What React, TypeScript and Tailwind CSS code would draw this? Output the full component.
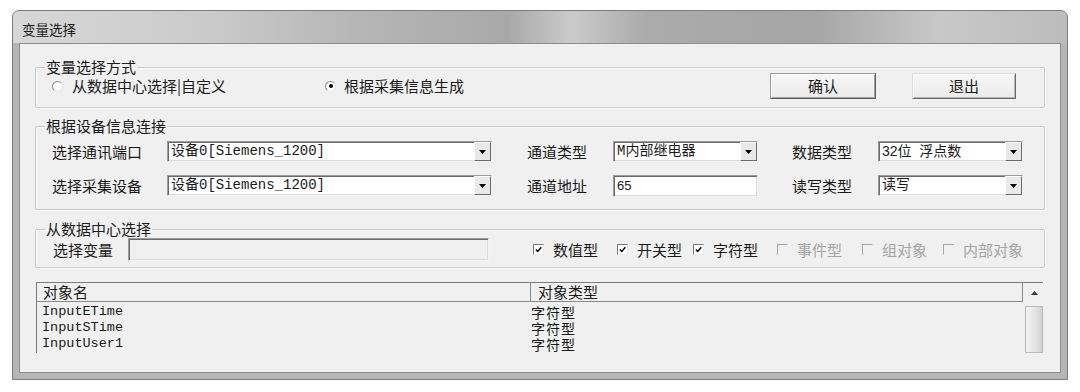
import React from "react";

// ─── Shared styles ────────────────────────────────────────────────────────────

const sunken =
    "border border-t-[#9c9c9c] border-l-[#9c9c9c] border-b-[#f4f4f4] border-r-[#f4f4f4] shadow-[inset_1px_1px_0_#6a6a6a,inset_-1px_-1px_0_#dcdcdc]";

const groupBox = "m-0 p-0 border border-[#c9c9c9] rounded-[2px] shadow-[inset_1px_1px_0_#fafafa,1px_1px_0_#fafafa]";

const monoFont = "font-['Liberation_Mono','Noto_Sans_CJK_SC',monospace]";

// ─── Small controls ───────────────────────────────────────────────────────────

function DownArrow() {
    return (
        <svg width="7" height="4" viewBox="0 0 7 4">
            <polygon points="0,0 7,0 3.5,4" fill="#000" />
        </svg>
    );
}

function Combo({ value, className, textClass = monoFont }: { value: string; className: string; textClass?: string }) {
    return (
        <div className={`flex h-[21px] items-stretch bg-white ${sunken} ${className}`}>
            <span className={`flex-1 truncate pl-[3px] text-[14px] leading-[18px] ${textClass}`}>{value}</span>
            <span className="flex w-[17px] items-center justify-center border border-t-white border-l-white border-b-[#6a6a6a] border-r-[#6a6a6a] bg-[#e9e9e9]">
                <DownArrow />
            </span>
        </div>
    );
}

function TextBox({ value, className }: { value?: string; className: string }) {
    return (
        <div className={`flex items-center ${sunken} ${className}`}>
            <span className="pl-[3px] font-['Liberation_Sans',sans-serif] text-[13px]">{value}</span>
        </div>
    );
}

function Radio({ checked }: { checked?: boolean }) {
    return (
        <span className="flex h-[11px] w-[11px] shrink-0 items-center justify-center rounded-full border border-t-[#8a8a8a] border-l-[#8a8a8a] border-b-[#e2e2e2] border-r-[#e2e2e2] bg-white">
            {checked && <span className="h-[4px] w-[4px] rounded-full bg-black" />}
        </span>
    );
}

function Check({ label, checked, disabled, className }: { label: string; checked?: boolean; disabled?: boolean; className: string }) {
    return (
        <div className={`flex items-center ${className}`}>
            <span
                className={`flex h-[11px] w-[11px] shrink-0 items-center justify-center border ${
                    disabled
                        ? "border-t-[#a8a8a8] border-l-[#a8a8a8] border-b-transparent border-r-transparent"
                        : "border-t-[#7a7a7a] border-l-[#7a7a7a] border-b-[#e6e6e6] border-r-[#e6e6e6] bg-white"
                }`}
            >
                {checked && (
                    <svg width="7" height="7" viewBox="0 0 7 7">
                        <path d="M0.8 3.4 L2.8 5.4 L6.3 1.2" stroke="#000" strokeWidth="1.4" fill="none" />
                    </svg>
                )}
            </span>
            <span className={`ml-[9px] text-[15px] leading-[18px] ${disabled ? "text-[#a3a3a3]" : ""}`}>{label}</span>
        </div>
    );
}

function Button({ label, isDefault, className }: { label: string; isDefault?: boolean; className: string }) {
    return (
        <button
            className={`flex h-[26px] items-center justify-center bg-[linear-gradient(#f6f6f6,#ebebeb)] text-[15px] leading-[18px] border ${
                isDefault
                    ? "border-t-[#9a9a9a] border-l-[#9a9a9a] border-b-[#5c5c5c] border-r-[#5c5c5c] shadow-[inset_1px_1px_0_#fff,inset_-1px_-1px_0_#a3a3a3]"
                    : "border-t-[#dadada] border-l-[#dadada] border-b-[#6a6a6a] border-r-[#6a6a6a] shadow-[inset_1px_1px_0_#fff,inset_-1px_-1px_0_#b5b5b5]"
            } ${className}`}
        >
            {label}
        </button>
    );
}

function Legend({ children }: { children: React.ReactNode }) {
    return <legend className="ml-[9px] px-[1px] text-[15px] leading-[16px]">{children}</legend>;
}

// ─── Data ─────────────────────────────────────────────────────────────────────

const objects = [
    { name: "InputETime", type: "字符型" },
    { name: "InputSTime", type: "字符型" },
    { name: "InputUser1", type: "字符型" },
];

// ─── Dialog ───────────────────────────────────────────────────────────────────

export default function App() {
    return (
        <div className="h-[392px] w-[1080px] bg-white pt-[10px] pl-[12px] font-['Noto_Sans_CJK_SC',sans-serif] text-[#1a1a1a]">
            {/* Window frame */}
            <div className="flex h-[370px] w-[1056px] flex-col rounded-t-[7px] border border-[#7c7c7c] bg-[#b6b6b6] px-[6px] pb-[6px]">
                {/* Title bar */}
                <div className="-mx-[6px] flex h-[32px] shrink-0 items-center rounded-t-[6px] bg-[linear-gradient(90deg,#d7d7d7_0%,#cbcbcb_18%,#b4b4b4_34%,#a9a9a9_47%,#cacaca_53%,#ababab_60%,#a6a6a6_76%,#c8c8c8_88%,#bcbcbc_100%)] pl-[9px] pt-[3px]">
                    <span className="text-[13.5px] leading-[16px]">变量选择</span>
                </div>

                {/* Client area */}
                <div className="flex flex-1 flex-col border border-[#8c8c8c] bg-[#f0f0f0] px-[15px]">
                    {/* 变量选择方式 */}
                    <fieldset className={`mt-[15px] h-[49px] ${groupBox}`}>
                        <Legend>变量选择方式</Legend>
                        <div className="-mt-[3px] flex h-[28px] items-center pl-[16px]">
                            <div className="flex w-[273px] items-center">
                                <Radio />
                                <span className="ml-[9px] text-[15px] leading-[18px]">从数据中心选择|自定义</span>
                            </div>
                            <div className="flex items-center">
                                <Radio checked />
                                <span className="ml-[8px] text-[15px] leading-[18px]">根据采集信息生成</span>
                            </div>
                            <div className="ml-auto mr-[28px] flex gap-[36px]">
                                <Button label="确认" isDefault className="w-[106px]" />
                                <Button label="退出" className="w-[104px]" />
                            </div>
                        </div>
                    </fieldset>

                    {/* 根据设备信息连接 */}
                    <fieldset className={`mt-[10px] h-[92px] ${groupBox}`}>
                        <Legend>根据设备信息连接</Legend>
                        <div className="mt-[7px] flex h-[21px] items-center pl-[16px] text-[15px] leading-[18px]">
                            <span className="w-[115px]">选择通讯端口</span>
                            <Combo value="设备0[Siemens_1200]" className="w-[325px]" />
                            <span className="ml-[35px] w-[86px]">通道类型</span>
                            <Combo value="M内部继电器" className="w-[145px]" />
                            <span className="ml-[34px] w-[86px]">数据类型</span>
                            <Combo
                                value="32位  浮点数"
                                className="w-[145px]"
                                textClass="whitespace-pre font-['Liberation_Sans','Noto_Sans_CJK_SC',sans-serif]"
                            />
                        </div>
                        <div className="mt-[13px] flex h-[21px] items-center pl-[16px] text-[15px] leading-[18px]">
                            <span className="w-[115px]">选择采集设备</span>
                            <Combo value="设备0[Siemens_1200]" className="w-[325px]" />
                            <span className="ml-[35px] w-[86px]">通道地址</span>
                            <TextBox value="65" className="h-[22px] w-[145px] bg-white" />
                            <span className="ml-[34px] w-[86px]">读写类型</span>
                            <Combo value="读写" className="w-[145px]" />
                        </div>
                    </fieldset>

                    {/* 从数据中心选择 */}
                    <fieldset className={`mt-[11px] h-[47px] ${groupBox}`}>
                        <Legend>从数据中心选择</Legend>
                        <div className="mt-[1px] flex h-[23px] items-center pl-[17px]">
                            <span className="w-[75px] text-[15px] leading-[18px]">选择变量</span>
                            <TextBox className="h-[23px] w-[361px] bg-[#f0f0f0]" />
                            <Check label="数值型" checked className="ml-[44px] w-[84px]" />
                            <Check label="开关型" checked className="w-[76px]" />
                            <Check label="字符型" checked className="w-[84px]" />
                            <Check label="事件型" disabled className="w-[85px]" />
                            <Check label="组对象" disabled className="w-[81px]" />
                            <Check label="内部对象" disabled className="" />
                        </div>
                    </fieldset>

                    {/* Object list */}
                    <div className="mt-[14px] ml-[1px] flex h-[71px] w-[1007px] overflow-hidden border-t border-[#7a7a7a]">
                        <div className="flex-1 border-l border-[#7a7a7a]">
                            <div className="grid h-[19px] grid-cols-[493px_1fr] border-b border-r border-[#8a8a8a] text-[15px] leading-[18px]">
                                <span className="pl-[6px]">对象名</span>
                                <span className="border-l border-[#8a8a8a] pl-[7px]">对象类型</span>
                            </div>
                            <div className="pt-[2px]">
                                {objects.map((o) => (
                                    <div key={o.name} className="grid h-[16px] grid-cols-[494px_1fr] items-center">
                                        <span className={`pl-[5px] text-[13.5px] leading-[16px] ${monoFont}`}>{o.name}</span>
                                        <span className="text-[14px] leading-[16px] tracking-[1px]">{o.type}</span>
                                    </div>
                                ))}
                            </div>
                        </div>
                        <div className="flex w-[20px] flex-col">
                            <div className="flex h-[20px] items-center justify-center pl-[2px]">
                                <svg width="7" height="4" viewBox="0 0 7 4">
                                    <polygon points="3.5,0 7,4 0,4" fill="#3a3a3a" />
                                </svg>
                            </div>
                            <div className="mt-[3px] ml-[2px] flex-1 border border-[#b9b9b9] bg-[linear-gradient(90deg,#f4f4f4,#e4e4e4_60%,#d2d2d2)]" />
                        </div>
                    </div>
                </div>
            </div>
        </div>
    );
}
